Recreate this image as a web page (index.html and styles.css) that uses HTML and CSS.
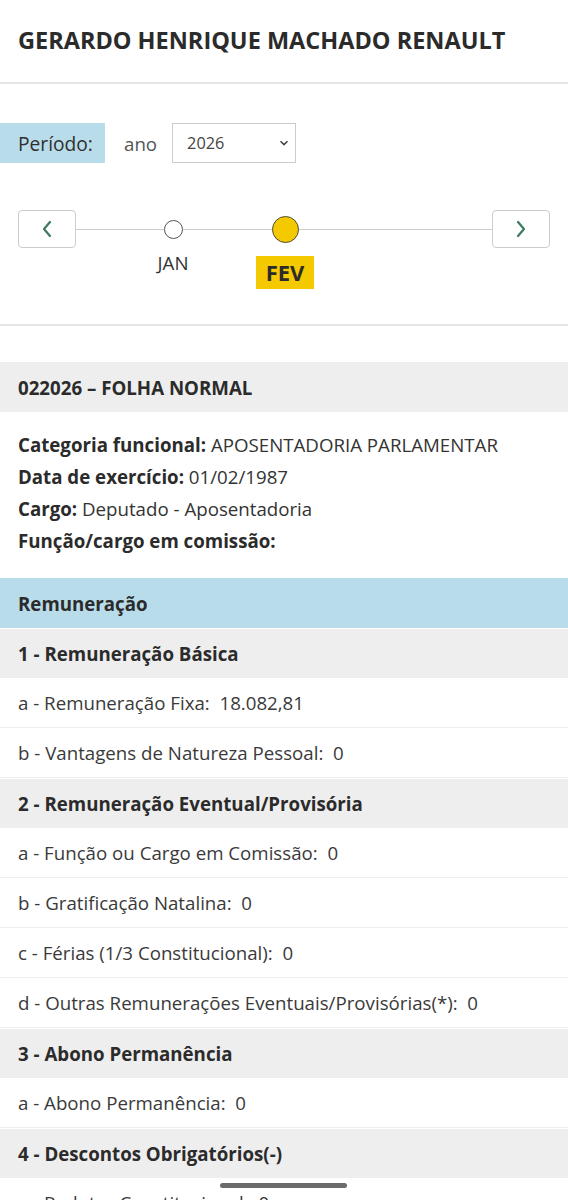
FILE: index.html
```html
<!DOCTYPE html>
<html lang="pt-BR">
<head>
<meta charset="utf-8">
<title>Remuneração</title>
<link rel="stylesheet" href="styles.css">
</head>
<body>
<header class="page-head">
  <h1 class="name">GERARDO HENRIQUE MACHADO RENAULT</h1>
</header>

<section class="period">
  <div class="period-row">
    <span class="period-label">Período:</span>
    <span class="year-word">ano</span>
    <div class="select">
      <span>2026</span>
      <svg class="select-caret" width="10" height="6" viewBox="0 0 10 6"><path d="M1.5 1.2 L5 4.6 L8.5 1.2" fill="none" stroke="#444" stroke-width="1.5"/></svg>
    </div>
  </div>

  <div class="timeline">
    <button class="nav-btn" aria-label="anterior">
      <svg width="12" height="18" viewBox="0 0 12 18"><path d="M9 2 L3 9 L9 16" fill="none" stroke="#3b7a5f" stroke-width="2.2" stroke-linejoin="round" stroke-linecap="round"/></svg>
    </button>
    <div class="track">
      <div class="month">
        <span class="dot"></span>
        <span class="month-label">JAN</span>
      </div>
      <div class="month active">
        <span class="dot"></span>
        <span class="month-label">FEV</span>
      </div>
    </div>
    <button class="nav-btn" aria-label="próximo">
      <svg width="12" height="18" viewBox="0 0 12 18"><path d="M3 2 L9 9 L3 16" fill="none" stroke="#3b7a5f" stroke-width="2.2" stroke-linejoin="round" stroke-linecap="round"/></svg>
    </button>
  </div>
</section>

<section class="sheet">
  <h2 class="sheet-title">022026 – FOLHA NORMAL</h2>
  <div class="info">
    <p><b>Categoria funcional:</b> APOSENTADORIA PARLAMENTAR</p>
    <p><b>Data de exercício:</b> 01/02/1987</p>
    <p><b>Cargo:</b> Deputado - Aposentadoria</p>
    <p><b>Função/cargo em comissão:</b></p>
  </div>

  <div class="band">Remuneração</div>

  <div class="group">1 - Remuneração Básica</div>
  <div class="row">a - Remuneração Fixa:&nbsp; 18.082,81</div>
  <div class="row">b - Vantagens de Natureza Pessoal:&nbsp; 0</div>

  <div class="group">2 - Remuneração Eventual/Provisória</div>
  <div class="row">a - Função ou Cargo em Comissão:&nbsp; 0</div>
  <div class="row">b - Gratificação Natalina:&nbsp; 0</div>
  <div class="row">c - Férias (1/3 Constitucional):&nbsp; 0</div>
  <div class="row">d - Outras Remunerações Eventuais/Provisórias(*):&nbsp; 0</div>

  <div class="group">3 - Abono Permanência</div>
  <div class="row">a - Abono Permanência:&nbsp; 0</div>

  <div class="group">4 - Descontos Obrigatórios(-)</div>
  <div class="row">a - Redutor Constitucional:&nbsp; 0</div>
</section>

<div class="home-indicator"></div>
</body>
</html>
```

FILE: styles.css
```css
* { box-sizing: border-box; }

html, body {
  margin: 0;
  padding: 0;
  background: #fff;
}

body {
  font-family: "Open Sans", "Noto Sans", sans-serif;
  color: #333;
  font-size: 18.7px;
}

.page-head {
  height: 84px;
  border-bottom: 2px solid #e6e6e6;
  padding: 23px 18px 0;
}

.name {
  margin: 0;
  font-size: 23.5px;
  font-weight: 700;
  line-height: 34px;
  color: #2b2b2b;
}

.period {
  padding-top: 39px;
  height: 242px;
  border-bottom: 2px solid #e6e6e6;
}

.period-row {
  display: flex;
  align-items: center;
  height: 40px;
}

.period-label {
  background: #b9dcea;
  height: 40px;
  width: 105px;
  padding-left: 18px;
  display: flex;
  align-items: center;
  font-size: 19.2px;
  color: #2f2f2f;
}

.year-word {
  margin-left: 19px;
  color: #555;
  font-size: 18.7px;
}

.select {
  margin-left: 15px;
  width: 124px;
  height: 40px;
  border: 1px solid #ccc;
  display: flex;
  align-items: center;
  justify-content: space-between;
  padding: 0 6px 0 14px;
  font-size: 16.3px;
  color: #444;
}

.timeline {
  margin-top: 47px;
  display: flex;
  align-items: flex-start;
  padding: 0 18px;
}

.nav-btn {
  width: 58px;
  height: 38px;
  border: 1px solid #ccc;
  border-radius: 4px;
  background: #fff;
  display: flex;
  align-items: center;
  justify-content: center;
  padding: 0;
  flex: none;
}

.track {
  flex: 1;
  position: relative;
  display: flex;
  height: 38px;
  padding-left: 41px;
}

.track::before {
  content: "";
  position: absolute;
  left: 0;
  right: 0;
  top: 19px;
  height: 1px;
  background: #cfcfcf;
}

.month {
  position: relative;
  width: 112px;
  display: flex;
  flex-direction: column;
  align-items: center;
}

.dot {
  margin-top: 10px;
  width: 19px;
  height: 19px;
  border-radius: 50%;
  border: 1px solid #555;
  background: #fff;
  flex: none;
}

.month-label {
  margin-top: 12px;
  font-size: 18.7px;
  line-height: 24px;
  color: #333;
}

.month.active .dot {
  margin-top: 6px;
  width: 27px;
  height: 27px;
  background: #f5c900;
  border: 1.5px solid #4a4a3a;
}

.month.active .month-label {
  margin-top: 13px;
  background: #f5c900;
  font-weight: 700;
  font-size: 22px;
  line-height: 33px;
  width: 58px;
  text-align: center;
  color: #2b2b2b;
}

.sheet {
  margin-top: 36px;
}

.sheet-title {
  margin: 0;
  background: #eeeeee;
  height: 50px;
  display: flex;
  align-items: center;
  padding: 0 18px;
  font-size: 18.7px;
  font-weight: 700;
  color: #2b2b2b;
}

.info {
  padding: 17px 18px 21px;
}

.info p {
  margin: 0;
  line-height: 32px;
  font-size: 18.7px;
  color: #333;
}

.info b {
  color: #2b2b2b;
}

.band {
  background: #b9dcea;
  height: 50px;
  display: flex;
  align-items: center;
  padding: 0 18px;
  font-weight: 700;
  font-size: 18.7px;
  color: #2b2b2b;
}

.group {
  background: #eeeeee;
  height: 50px;
  display: flex;
  align-items: center;
  padding: 0 18px;
  font-weight: 700;
  font-size: 18.7px;
  color: #2b2b2b;
  border-top: 1px solid #fff;
}

.row {
  height: 50px;
  display: flex;
  align-items: center;
  padding: 0 18px;
  font-size: 18.7px;
  color: #3a3a3a;
  border-bottom: 1px solid #eeeeee;
}

.home-indicator {
  position: fixed;
  left: 220px;
  top: 1183px;
  width: 127px;
  height: 5px;
  border-radius: 3px;
  background: #6b6b6b;
}
```
